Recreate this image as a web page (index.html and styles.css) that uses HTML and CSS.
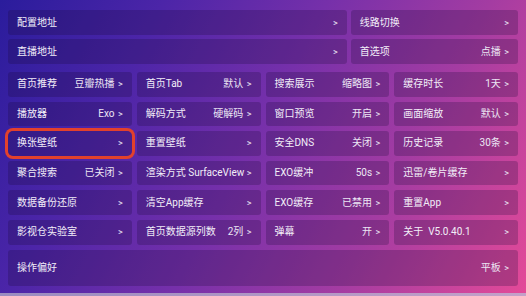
FILE: index.html
```html
<!DOCTYPE html>
<html lang="zh">
<head>
<meta charset="utf-8">
<link rel="stylesheet" href="styles.css">
</head>
<body>
<div class="screen">
  <div class="grid3">
    <div class="cell span2"><span class="label">配置地址</span><span class="val"><i>&gt;</i></span></div>
    <div class="cell"><span class="label">线路切换</span><span class="val"><i>&gt;</i></span></div>
    <div class="cell span2"><span class="label">直播地址</span><span class="val"><i>&gt;</i></span></div>
    <div class="cell"><span class="label">首选项</span><span class="val">点播 <i>&gt;</i></span></div>
  </div>
  <div class="grid4">
    <div class="cell"><span class="label">首页推荐</span><span class="val">豆瓣热播 <i>&gt;</i></span></div>
    <div class="cell"><span class="label">首页Tab</span><span class="val">默认 <i>&gt;</i></span></div>
    <div class="cell"><span class="label">搜索展示</span><span class="val">缩略图 <i>&gt;</i></span></div>
    <div class="cell"><span class="label">缓存时长</span><span class="val">1天 <i>&gt;</i></span></div>

    <div class="cell"><span class="label">播放器</span><span class="val">Exo <i>&gt;</i></span></div>
    <div class="cell"><span class="label">解码方式</span><span class="val">硬解码 <i>&gt;</i></span></div>
    <div class="cell"><span class="label">窗口预览</span><span class="val">开启 <i>&gt;</i></span></div>
    <div class="cell"><span class="label">画面缩放</span><span class="val">默认 <i>&gt;</i></span></div>

    <div class="cell focus"><span class="label">换张壁纸</span><span class="val"><i>&gt;</i></span></div>
    <div class="cell"><span class="label">重置壁纸</span><span class="val"><i>&gt;</i></span></div>
    <div class="cell"><span class="label">安全DNS</span><span class="val">关闭 <i>&gt;</i></span></div>
    <div class="cell"><span class="label">历史记录</span><span class="val">30条 <i>&gt;</i></span></div>

    <div class="cell"><span class="label">聚合搜索</span><span class="val">已关闭 <i>&gt;</i></span></div>
    <div class="cell"><span class="label">渲染方式 SurfaceView</span><span class="val"><i>&gt;</i></span></div>
    <div class="cell"><span class="label">EXO缓冲</span><span class="val">50s <i>&gt;</i></span></div>
    <div class="cell"><span class="label">迅雷/卷片缓存</span><span class="val"><i>&gt;</i></span></div>

    <div class="cell"><span class="label">数据备份还原</span><span class="val"><i>&gt;</i></span></div>
    <div class="cell"><span class="label">清空App缓存</span><span class="val"><i>&gt;</i></span></div>
    <div class="cell"><span class="label">EXO缓存</span><span class="val">已禁用 <i>&gt;</i></span></div>
    <div class="cell"><span class="label">重置App</span><span class="val"><i>&gt;</i></span></div>

    <div class="cell"><span class="label">影视仓实验室</span><span class="val"><i>&gt;</i></span></div>
    <div class="cell"><span class="label">首页数据源列数</span><span class="val">2列 <i>&gt;</i></span></div>
    <div class="cell"><span class="label">弹幕</span><span class="val">开 <i>&gt;</i></span></div>
    <div class="cell"><span class="label">关于&nbsp;&nbsp;V5.0.40.1</span><span class="val"><i>&gt;</i></span></div>
  </div>
  <div class="cell tall"><span class="label">操作偏好</span><span class="val">平板 <i>&gt;</i></span></div>
  <div class="peek"></div>
</div>
</body>
</html>
```

FILE: styles.css
```css
* { box-sizing: border-box; }
html, body { margin: 0; padding: 0; }
body {
  width: 526px;
  height: 296px;
  overflow: hidden;
  font-family: Roboto, "Noto Sans CJK SC", sans-serif;
  color: #f2eef8;
}
.screen {
  width: 526px;
  height: 296px;
  padding: 10px 8px 0 8px;
  display: flex;
  flex-direction: column;
  background: linear-gradient(118deg, #2a1c9c 0%, #4c25a8 24%, #7630aa 48%, #a43ca2 72%, #e44a98 100%);
  position: relative;
}
.grid3 {
  display: grid;
  grid-template-columns: 1fr 1fr 1fr;
  grid-auto-rows: 25px;
  gap: 4px 4px;
}
.span2 { grid-column: span 2; }
.grid4 {
  margin-top: 8px;
  display: grid;
  grid-template-columns: 1fr 1fr 1fr 1fr;
  grid-auto-rows: 24.6px;
  gap: 5px 5px;
}
.cell {
  display: flex;
  align-items: center;
  justify-content: space-between;
  padding: 0 9px 0 9px;
  background: rgba(24, 8, 56, 0.24);
  border-radius: 3px;
  font-size: 10px;
  line-height: 1;
  white-space: nowrap;
}
.label { color: #f2eef8; }
.val { color: #ece6f4; }
.val i {
  font-style: normal;
  font-size: 9px;
  margin-left: 1px;
}
.focus {
  box-shadow: 0 0 0 3px #e2412c;
  border-radius: 5px;
}
.tall {
  margin-top: 5px;
  height: 36px;
}
.peek {
  position: absolute;
  left: 0;
  right: 0;
  bottom: 0;
  height: 3px;
  background: linear-gradient(90deg, #9a8cc0, #c4a0c8);
}
```
